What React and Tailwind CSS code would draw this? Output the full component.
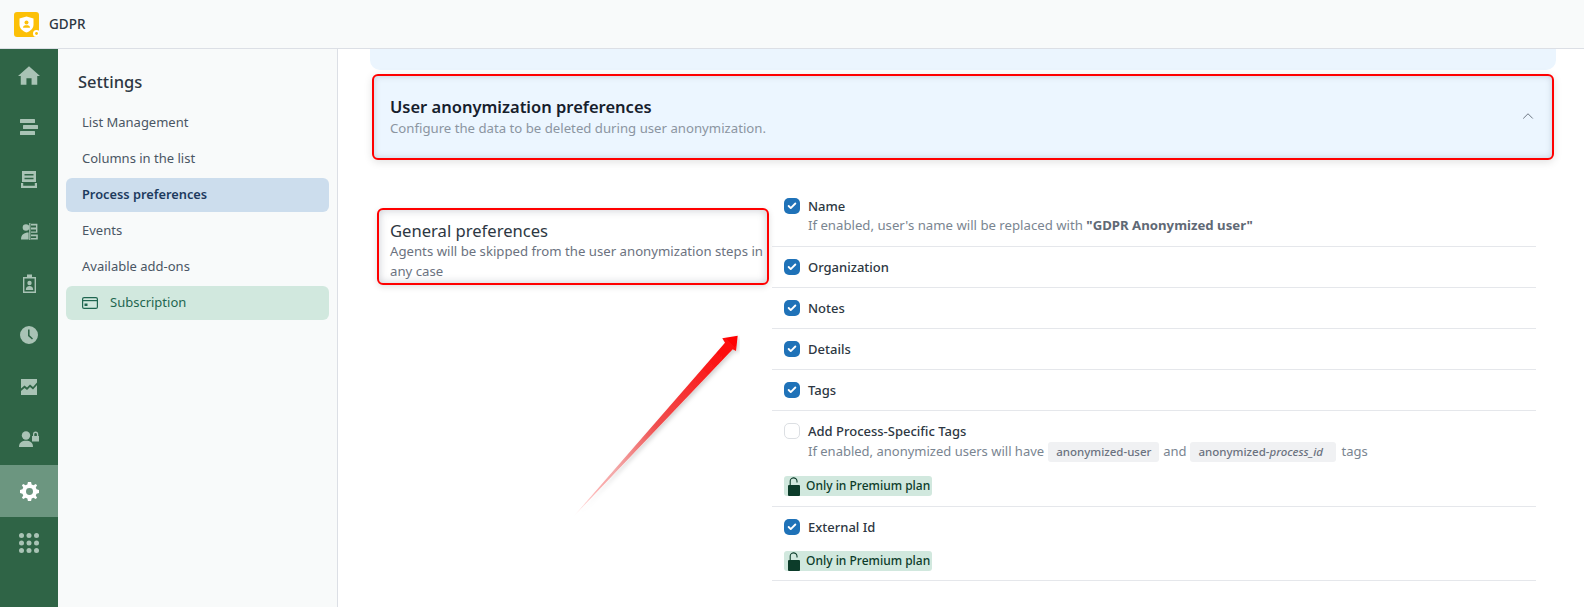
import React from 'react';
import { Check, ChevronUp } from 'lucide-react';

const font = "[font-family:'Noto_Sans','Open_Sans',sans-serif]";

// sidebar icons, drawn on small boxes
const HomeIcon = () => (
  <svg viewBox="0 0 24 20" className="w-[22px] h-[19px]" fill="currentColor">
    <path d="M12 0 L24 10.5 L21 10.5 L21 20 L14.8 20 L14.8 13 L9.2 13 L9.2 20 L3 20 L3 10.5 L0 10.5 Z" />
  </svg>
);
const BarsIcon = () => (
  <svg viewBox="0 0 18 16" className="w-[18px] h-4" fill="currentColor">
    <rect x="0" y="0" width="15" height="4" rx="0.5" />
    <rect x="3" y="6" width="15" height="4" rx="0.5" />
    <rect x="0" y="12" width="15" height="4" rx="0.5" />
  </svg>
);
const InboxIcon = () => (
  <svg viewBox="0 0 16 17" className="w-4 h-[17px]" fill="currentColor">
    <path fillRule="evenodd" d="M1 0 H15 V11 H1 Z M3.5 3 V4.4 H12.5 V3 Z M3.5 6.8 V8.2 H12.5 V6.8 Z" />
    <path d="M0 12 H2.2 V14.8 H13.8 V12 H16 V17 H0 Z" />
  </svg>
);
const PeopleIcon = () => (
  <svg viewBox="0 0 17 17" className="w-[17px] h-[17px]" fill="currentColor">
    <circle cx="5" cy="4.5" r="3.3" />
    <path d="M0 16.5 C0 11.5 3 9.5 7.6 9.5 V16.5 Z" />
    <rect x="8.2" y="0" width="1.2" height="17" />
    <path fillRule="evenodd" d="M10 0.8 H16.4 V9.8 H10 V8.4 H15 V6.6 H10 V4.6 H15 V2.4 H10 Z" />
    <path d="M10 11.6 H16.8 V16.5 H10 V15 H15.2 V13.2 H10 Z" />
  </svg>
);
const BadgeIcon = () => (
  <svg viewBox="0 0 13 19" className="w-[13px] h-[19px]" fill="currentColor">
    <path fillRule="evenodd" d="M0 3 H4 V0.5 H9 V3 H13 V19 H0 Z M1.4 4.4 V17.6 H11.6 V4.4 Z" />
    <circle cx="6.5" cy="9" r="2.2" />
    <path d="M2.8 16 C2.8 13 4.5 12 6.5 12 C8.5 12 10.2 13 10.2 16 Z" />
  </svg>
);
const ClockIcon = () => (
  <svg viewBox="0 0 18 18" className="w-[18px] h-[18px]" fill="currentColor">
    <path fillRule="evenodd" d="M9 0 A9 9 0 1 1 9 18 A9 9 0 1 1 9 0 Z M8 3.5 V10 L12 13.5 L13 12.4 L9.6 9.2 V3.5 Z" />
  </svg>
);
const ChartIcon = () => (
  <svg viewBox="0 0 16 16" className="w-4 h-4" fill="currentColor">
    <path d="M0 0 H16 V3.5 L12 8 L9 5.5 L6 8.5 L3.5 6.5 L0 9.5 Z" />
    <path d="M0 12 L3.5 9 L6 11 L9 8 L12 10.5 L16 6 V16 H0 Z" />
  </svg>
);
const UserLockIcon = () => (
  <svg viewBox="0 0 20 17" className="w-5 h-[17px]" fill="currentColor">
    <circle cx="7" cy="4.5" r="4.2" />
    <path d="M0 16 C0 11.5 3 9.8 7 9.8 C11 9.8 14 11.5 14 16 Z" />
    <path fillRule="evenodd" d="M13 5 H14 V3.2 A2.6 2.6 0 0 1 19.2 3.2 V5 H20 V10.5 H13 Z M15.3 5 H17.9 V3.2 A1.3 1.3 0 0 0 15.3 3.2 Z" />
  </svg>
);
const GearIcon = () => (
  <svg viewBox="0 0 24 24" className="w-[19px] h-[19px]" fill="currentColor">
    <path fillRule="evenodd" d="M10 0 H14 L14.7 3.1 L17.1 4.1 L19.8 2.4 L21.6 4.2 L19.9 6.9 L20.9 9.3 L24 10 V14 L20.9 14.7 L19.9 17.1 L21.6 19.8 L19.8 21.6 L17.1 19.9 L14.7 20.9 L14 24 H10 L9.3 20.9 L6.9 19.9 L4.2 21.6 L2.4 19.8 L4.1 17.1 L3.1 14.7 L0 14 V10 L3.1 9.3 L4.1 6.9 L2.4 4.2 L4.2 2.4 L6.9 4.1 L9.3 3.1 Z M12 7.6 A4.4 4.4 0 1 0 12 16.4 A4.4 4.4 0 1 0 12 7.6 Z" />
  </svg>
);
const GridIcon = () => (
  <svg viewBox="0 0 20 20" className="w-5 h-5" fill="currentColor">
    {[2.5, 10, 17.5].map((y) =>
      [2.5, 10, 17.5].map((x) => <circle key={`${x}-${y}`} cx={x} cy={y} r="2.5" />)
    )}
  </svg>
);

const navIcons = [HomeIcon, BarsIcon, InboxIcon, PeopleIcon, BadgeIcon, ClockIcon, ChartIcon, UserLockIcon, GearIcon, GridIcon];

const Logo = () => (
  <svg viewBox="0 0 25 25" className="w-[25px] h-[25px]">
    <rect width="25" height="25" rx="3" fill="#fcc007" />
    <path d="M12.5 4.5 L19.5 6.6 V12.5 C19.5 16.5 16.5 19 12.5 20.5 C8.5 19 5.5 16.5 5.5 12.5 V6.6 Z" fill="#fff" />
    <circle cx="12.5" cy="10.6" r="2" fill="#fcc007" />
    <path d="M9 15.8 C9 13.8 10.5 13.2 12.5 13.2 C14.5 13.2 16 13.8 16 15.8 Z" fill="#fcc007" />
    <circle cx="22.5" cy="21.5" r="3.5" fill="#fff" />
    <circle cx="22.5" cy="21.5" r="1.4" fill="#fcc007" />
  </svg>
);

const LockOpen = () => (
  <svg viewBox="0 0 12 19" className="w-3 h-[19px]">
    <path d="M2.2 9 V4.5 A3.4 3.4 0 0 1 9 4 V5.5" fill="none" stroke="#0c3c2a" strokeWidth="1.1" />
    <rect x="0" y="8" width="12" height="11" rx="1" fill="#0c3c2a" />
  </svg>
);

const PremiumBadge = ({ className = '' }) => (
  <div className={`flex items-center gap-[6px] w-[148px] h-5 pl-[4px] rounded-[3px] bg-[#d1e8de] text-[12px] font-medium text-[#0c3c2a] ${className}`}>
    <LockOpen />
    <span>Only in Premium plan</span>
  </div>
);

const Chip = ({ className, children }) => (
  <span className={`inline-flex items-center h-5 pl-2 rounded-[3px] bg-[#f0f1f3] text-[11.5px] font-medium text-[#6b7280] ${className}`}>
    {children}
  </span>
);

const CheckItem = ({ label, checked = true, className = '', children }) => (
  <div className={`flex items-start gap-2 pl-3 border-b border-[#e5e7eb] ${className}`}>
    {checked ? (
      <span className="mt-[1px] flex items-center justify-center w-4 h-4 rounded-[5px] bg-[#1f72b8] text-white">
        <Check size={10} strokeWidth={4.5} />
      </span>
    ) : (
      <span className="mt-[1px] w-4 h-4 rounded-[5px] border border-[#dcdfe3] bg-white" />
    )}
    <div className="flex-1">
      <div className="text-[13px] leading-[18px] font-medium text-[#2d3742]">{label}</div>
      {children}
    </div>
  </div>
);

const Arrow = () => (
  <svg viewBox="0 0 170 190" className="absolute left-[570px] top-[332px] w-[170px] h-[190px] pointer-events-none">
    <defs>
      <linearGradient id="arrowFill" x1="3" y1="185" x2="168" y2="4" gradientUnits="userSpaceOnUse">
        <stop offset="0" stopColor="#ff0000" stopOpacity="0" />
        <stop offset="0.25" stopColor="#f09090" stopOpacity="0.75" />
        <stop offset="0.5" stopColor="#f05050" />
        <stop offset="1" stopColor="#ff0000" />
      </linearGradient>
      <filter id="arrowShadow" x="-20%" y="-20%" width="140%" height="140%">
        <feDropShadow dx="2" dy="2" stdDeviation="2" floodColor="#000" floodOpacity="0.18" />
      </filter>
    </defs>
    <path
      d="M3.3 184.7 L155 10.7 L152.3 6.3 L167.7 3.7 L166 19 L162.7 17.3 Z"
      fill="url(#arrowFill)"
      filter="url(#arrowShadow)"
    />
  </svg>
);

export default function App() {
  return (
    <div className={`relative w-[1584px] h-[607px] overflow-hidden bg-white ${font}`}>
      <header className="flex items-center gap-[10px] h-[49px] pl-[14px] bg-[#f8fafa] border-b border-[#dcdfe5]">
        <Logo />
        <span className="text-[13.5px] font-medium text-[#2d3742]">GDPR</span>
      </header>

      <div className="flex h-[558px]">
        <nav className="w-[58px] shrink-0 bg-[#2f6446] text-[#a9c3b5]">
          {navIcons.map((Icon, i) => (
            <div
              key={i}
              className={`flex items-center justify-center h-[52px] ${i === 8 ? 'bg-[#6c9680] text-white' : ''}`}
            >
              <Icon />
            </div>
          ))}
        </nav>

        <aside className="w-[280px] shrink-0 bg-[#f8fafa] border-r border-[#dcdfe5] pl-2 pr-2">
          <h2 className="mt-[21px] mb-[11px] pl-3 text-[16.5px] leading-6 font-medium text-[#2d3742]">Settings</h2>
          <div className="text-[13px] text-[#4a5664]">
            <div className="flex items-center h-9 pl-4">List Management</div>
            <div className="flex items-center h-9 pl-4">Columns in the list</div>
            <div className="flex items-center h-[34px] my-[1px] pl-4 rounded-md bg-[#ccdded] text-[12.8px] font-semibold text-[#1c3a5e]">Process preferences</div>
            <div className="flex items-center h-9 pl-4">Events</div>
            <div className="flex items-center h-9 pl-4">Available add-ons</div>
            <div className="flex items-center gap-3 h-[34px] my-[1px] pl-4 rounded-md bg-[#d1e8de] text-[#1f6650]">
              <svg viewBox="0 0 16 12" className="w-4 h-3" fill="none" stroke="currentColor" strokeWidth="1.2">
                <rect x="0.6" y="0.6" width="14.8" height="10.8" rx="1.5" />
                <path d="M0.6 3.6 H15.4" />
                <rect x="2.5" y="6.5" width="3" height="2.5" fill="currentColor" stroke="none" />
              </svg>
              <span>Subscription</span>
            </div>
          </div>
        </aside>

        <main className="flex-1 min-w-0 pl-8 pr-7">
          <div className="h-[21px] rounded-b-[10px] bg-[#ebf5fe]" />
          <div className="flex items-center justify-between h-[86px] mt-1 mx-[2px] pl-[16px] pr-[15px] rounded-md border-2 border-[#ff0000] bg-[#ecf6ff] shadow-[inset_0_0_6px_rgba(60,70,90,0.22),0_2px_8px_rgba(0,0,0,0.12)]">
            <div>
              <div className="-mt-px text-[16.5px] leading-[23px] font-semibold text-[#16202c]">User anonymization preferences</div>
              <div className="mt-px text-[13.2px] leading-[19px] text-[#8b95a1]">Configure the data to be deleted during user anonymization.</div>
            </div>
            <ChevronUp size={18} strokeWidth={1.2} className="mb-[2px] text-[#5f6975]" />
          </div>

          <div className="flex mt-[37px]">
            <div className="w-[400px] shrink-0 pt-[11px]">
              <div className="w-[392px] h-[77px] ml-[7px] pl-[11px] rounded-md border-2 border-[#ff0000] bg-white shadow-[inset_0_0_8px_rgba(60,70,90,0.28),0_2px_6px_rgba(0,0,0,0.12)]">
                <div className="mt-[10px] text-[16.6px] leading-[21px] text-[#2d3742]">General preferences</div>
                <div className="text-[13.2px] leading-5 text-[#6b7280]">Agents will be skipped from the user anonymization steps in any case</div>
              </div>
            </div>
            <div className="flex-1 min-w-0 ml-[2px] mr-[20px]">
              <CheckItem label="Name" className="h-[50px]">
                <div className="text-[13.2px] leading-5 text-[#7a8591]">
                  If enabled, user's name will be replaced with <b className="font-bold text-[#5f6975]">"GDPR Anonymized user"</b>
                </div>
              </CheckItem>
              <CheckItem label="Organization" className="h-[41px] pt-[11px]" />
              <CheckItem label="Notes" className="h-[41px] pt-[11px]" />
              <CheckItem label="Details" className="h-[41px] pt-[11px]" />
              <CheckItem label="Tags" className="h-[41px] pt-[11px]" />
              <CheckItem label="Add Process-Specific Tags" checked={false} className="h-[96px] pt-[11px]">
                <div className="flex items-center h-[22px] mt-px text-[13px] text-[#7a8591] whitespace-nowrap">
                  If enabled, anonymized users will have
                  <Chip className="ml-[4px] w-[111px]">anonymized-user</Chip>
                  <span className="mx-[4px]">and</span>
                  <Chip className="w-[146px]">
                    anonymized-<i className="font-medium">process_id</i>
                  </Chip>
                  <span className="ml-[5px]">tags</span>
                </div>
                <PremiumBadge className="-ml-6 mt-[13px]" />
              </CheckItem>
              <CheckItem label="External Id" className="h-[74px] pt-[11px]">
                <PremiumBadge className="-ml-6 mt-[15px]" />
              </CheckItem>
            </div>
          </div>
        </main>
      </div>

      <Arrow />
    </div>
  );
}
